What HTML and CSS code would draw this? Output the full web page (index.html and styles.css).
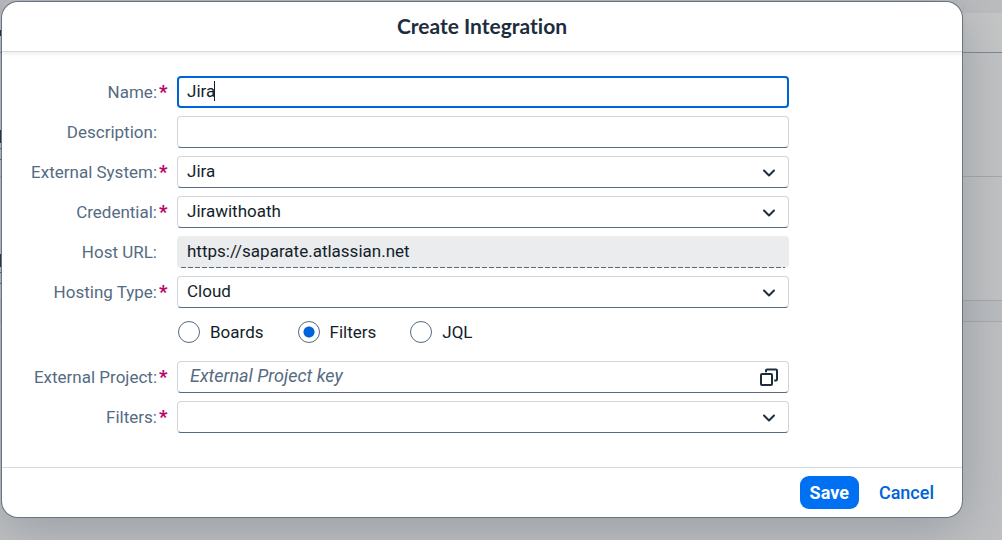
FILE: index.html
```html
<!DOCTYPE html>
<html lang="en">
<head>
<meta charset="utf-8">
<meta name="viewport" content="width=device-width, initial-scale=1">
<title>Create Integration</title>
<link rel="stylesheet" href="styles.css">
</head>
<body>
<div class="backdrop" aria-hidden="true">
  <div class="band band-top"></div>
  <div class="band band-bar"></div>
  <div class="band band-row"></div>
  <div class="band band-row"></div>
  <div class="band band-gap"></div>
</div>
<main class="page">
  <form class="dialog" role="dialog" aria-labelledby="title">
    <header class="dialog-header"><h1 id="title">Create Integration</h1></header>
    <div class="dialog-body">
      <div class="row">
        <label class="label required" for="name">Name:</label>
        <div class="control">
          <input class="field focused" id="name" type="text" value="Jira">
          <span class="caret"></span>
        </div>
      </div>
      <div class="row">
        <label class="label" for="description">Description:</label>
        <div class="control"><input class="field" id="description" type="text"></div>
      </div>
      <div class="row">
        <label class="label required" for="system">External System:</label>
        <div class="control">
          <select class="field" id="system"><option>Jira</option></select>
          <svg class="icon" viewBox="0 0 20 20"><path d="M5 8.500 10 13.500l5-5"/></svg>
        </div>
      </div>
      <div class="row">
        <label class="label required" for="credential">Credential:</label>
        <div class="control">
          <select class="field" id="credential"><option>Jirawithoath</option></select>
          <svg class="icon" viewBox="0 0 20 20"><path d="M5 8.500 10 13.500l5-5"/></svg>
        </div>
      </div>
      <div class="row">
        <label class="label" for="host">Host URL:</label>
        <div class="control"><input class="field readonly" id="host" type="text" value="https://saparate.atlassian.net" readonly></div>
      </div>
      <div class="row">
        <label class="label required" for="hosting">Hosting Type:</label>
        <div class="control">
          <select class="field" id="hosting"><option>Cloud</option></select>
          <svg class="icon" viewBox="0 0 20 20"><path d="M5 8.500 10 13.500l5-5"/></svg>
        </div>
      </div>
      <div class="row radio-row">
        <div class="radios" role="radiogroup" aria-label="Source">
          <label class="radio"><input type="radio" name="source">Boards</label>
          <label class="radio"><input type="radio" name="source" checked>Filters</label>
          <label class="radio"><input type="radio" name="source">JQL</label>
        </div>
      </div>
      <div class="row">
        <label class="label required" for="project">External Project:</label>
        <div class="control">
          <input class="field lookup" id="project" type="text" placeholder="External Project key">
          <svg class="icon" viewBox="0 0 20 20"><rect x="2" y="7" width="11" height="11" rx="1"/><path d="M7 4.500V3.500a1 1 0 0 1 1-1H17a1 1 0 0 1 1 1V12.500a1 1 0 0 1-1 1H16"/></svg>
        </div>
      </div>
      <div class="row">
        <label class="label required" for="filters">Filters:</label>
        <div class="control">
          <select class="field" id="filters"><option></option></select>
          <svg class="icon" viewBox="0 0 20 20"><path d="M5 8.500 10 13.500l5-5"/></svg>
        </div>
      </div>
    </div>
    <footer class="dialog-footer">
      <button class="button primary" type="button">Save</button>
      <button class="button" type="button">Cancel</button>
    </footer>
  </form>
</main>
</body>
</html>
```
FILE: styles.css
```css
* {
  box-sizing: border-box;
}

body {
  margin: 0;
  min-height: 100vh;
  background: #bfc0c2;
  color: #131e29;
  font: 17px/24px Roboto, "Liberation Sans", sans-serif;
}

.backdrop {
  position: absolute;
  inset: 0;
  overflow: hidden;
}

.band-top {
  height: 13px;
  background: #bcbdbf;
}

.band-bar {
  height: 40px;
  background: linear-gradient(#1d2d3e, #1d2d3e) 0 17px / 1px 6px no-repeat #c5c6c6;
  border-bottom: 1px solid #7c8795;
}

.band-row {
  height: 124px;
  background:
    linear-gradient(#1d2d3e, #1d2d3e) 0 77px / 2px 13px no-repeat,
    linear-gradient(#405a78, #405a78) 0 95px / 2px 1px no-repeat,
    linear-gradient(#405a78, #405a78) 0 106px / 2px 1px no-repeat,
    #c2c3c4;
  border-bottom: 1px solid #a6a9ac;
}

.band-gap {
  height: 21px;
  background: #bbbdc0;
  border-bottom: 1px solid #a6a9ac;
}

.page {
  position: relative;
  padding: 2px 40px 22px 2px;
}

.dialog {
  background: #fff;
  border-radius: 16px;
  box-shadow: 0 0 0 1px #6b7580, 0 10px 56px rgba(85, 98, 110, 0.400);
}

.dialog-header {
  padding: 12px 16px 13px;
  border-bottom: 1px solid #d5d8dc;
  box-shadow: 0 2px 4px rgba(85, 107, 130, 0.120);
  text-align: center;
}

h1 {
  margin: 0;
  color: #1d2d3e;
  font: bold 21px/24px Lato, sans-serif;
  font-variant-ligatures: none;
}

.dialog-body {
  display: flex;
  flex-direction: column;
  gap: 8px;
  padding: 24px 173px 34px 0;
}

.row {
  display: grid;
  grid-template-columns: 155px minmax(0, 1fr);
  column-gap: 20px;
  align-items: center;
}

.label {
  position: relative;
  color: #556b82;
  text-align: right;
}

.required::after {
  content: "*";
  position: absolute;
  left: 100%;
  top: 0;
  padding-left: 2px;
  color: #ba066c;
  font-weight: 900;
  font-size: 18px;
}

.control {
  position: relative;
}

.field {
  display: block;
  width: 100%;
  height: 32px;
  margin: 0;
  padding: 0 44px 2px 9px;
  appearance: none;
  background: #fff;
  border: 1px solid #d1d6dd;
  border-bottom-color: #556b82;
  border-radius: 4px;
  outline: 0;
  color: #131e29;
  font: inherit;
}

.field.focused {
  padding-left: 8px;
  border: 2px solid #0064d9;
}

.field.readonly {
  background: repeating-linear-gradient(90deg, #556b82 0 5px, #eaecee 5px 7px) 4px 100% / calc(100% - 8px) 1px no-repeat #eaecee;
  border: 0;
  padding-left: 10px;
}

.field.lookup {
  padding-left: 12px;
}

.field::placeholder {
  color: #556b82;
  font-size: 18px;
  font-style: italic;
  opacity: 1;
}

.caret {
  position: absolute;
  left: 37px;
  top: 5px;
  width: 1px;
  height: 20px;
  background: #131e29;
}

.icon {
  position: absolute;
  right: 10px;
  top: 6px;
  width: 20px;
  height: 20px;
  fill: none;
  stroke: #1d2d3e;
  stroke-width: 2;
  stroke-linecap: round;
  stroke-linejoin: round;
  pointer-events: none;
}

.radio-row {
  padding: 4px 0 9px;
}

.radios {
  grid-column: 2;
  display: flex;
  gap: 33px;
}

.radio {
  display: flex;
  align-items: center;
  gap: 10px;
}

.radio input {
  appearance: none;
  width: 22px;
  height: 22px;
  margin: 0 0 0 1px;
  border: 1px solid #556b82;
  border-radius: 50%;
}

.radio input:checked {
  background: radial-gradient(circle, #0064d9 5px, #fff 6px);
}

.dialog-footer {
  display: flex;
  justify-content: flex-end;
  gap: 10px;
  padding: 8px 18px;
  border-top: 1px solid #d5d8dc;
}

.button {
  height: 33px;
  padding: 0 10px;
  background: none;
  border: 0;
  border-radius: 9px;
  color: #0064d9;
  font: 500 18px/24px Roboto, sans-serif;
}

.button.primary {
  background: #0070f2;
  color: #fff;
  font-weight: bold;
}
```
